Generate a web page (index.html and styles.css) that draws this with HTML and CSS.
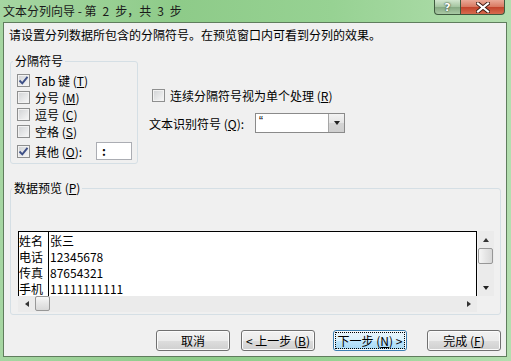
FILE: index.html
```html
<!DOCTYPE html>
<html lang="zh-CN">
<head>
  <meta charset="UTF-8" />
  <title>文本分列向导</title>
  <link rel="stylesheet" href="styles.css">
</head>
<body>
  <div class="window">
    <div class="titlebar">
      <span class="title">文本分列向导 - 第&ensp;2&ensp;步，共&ensp;3&ensp;步</span>
      <div class="caption-btns">
        <span class="cap-btn help">?</span>
        <span class="cap-btn close">
          <svg width="14" height="11" viewBox="0 0 14 11"><path d="M2 1.5 L12 9.5 M12 1.5 L2 9.5" stroke="#3a1a12" stroke-width="4" stroke-linecap="square"/><path d="M2 1.5 L12 9.5 M12 1.5 L2 9.5" stroke="#fff" stroke-width="2.2" stroke-linecap="square"/></svg>
        </span>
      </div>
    </div>

    <div class="client">
      <p class="intro">请设置分列数据所包含的分隔符号。在预览窗口内可看到分列的效果。</p>

      <div class="options">
        <fieldset class="group delims">
          <legend>分隔符号</legend>
          <div class="check-list">
            <label class="check"><span class="box"><svg width="11" height="11" viewBox="0 0 11 11"><polyline points="1.5,5.5 4.3,8.3 9.5,1.8" fill="none" stroke="#3d4f86" stroke-width="1.9"/></svg></span>Tab 键 (<u>T</u>)</label>
            <label class="check"><span class="box"></span>分号 (<u>M</u>)</label>
            <label class="check"><span class="box"></span>逗号 (<u>C</u>)</label>
            <label class="check"><span class="box"></span>空格 (<u>S</u>)</label>
            <label class="check other"><span class="box"><svg width="11" height="11" viewBox="0 0 11 11"><polyline points="1.5,5.5 4.3,8.3 9.5,1.8" fill="none" stroke="#3d4f86" stroke-width="1.9"/></svg></span>其他 (<u>O</u>):<span class="textbox">:</span></label>
          </div>
        </fieldset>

        <div class="side">
          <label class="check merge"><span class="box"></span>连续分隔符号视为单个处理 (<u>R</u>)</label>
          <div class="qualifier">
            <span class="qualifier-label">文本识别符号 (<u>Q</u>):</span>
            <div class="combo">
              <span class="combo-value">&#8220;</span>
              <span class="combo-btn"><span class="tri down"></span></span>
            </div>
          </div>
        </div>
      </div>

      <fieldset class="group preview-group">
        <legend>数据预览 (<u>P</u>)</legend>
        <div class="preview">
          <div class="sheet">
            <div class="col first">
              <div>姓名</div>
              <div>电话</div>
              <div>传真</div>
              <div>手机</div>
            </div>
            <div class="col">
              <div>张三</div>
              <div>12345678</div>
              <div>87654321</div>
              <div>11111111111</div>
            </div>
          </div>
          <div class="vscroll">
            <span class="arrow"><span class="tri up"></span></span>
            <span class="thumb"></span>
            <span class="track"></span>
            <span class="arrow"><span class="tri down"></span></span>
          </div>
          <div class="hscroll">
            <span class="arrow"><span class="tri left"></span></span>
            <span class="thumb"></span>
            <span class="track"></span>
            <span class="arrow"><span class="tri right"></span></span>
          </div>
          <div class="corner"></div>
        </div>
      </fieldset>

      <div class="buttons">
        <span class="btn">取消</span>
        <span class="btn back">&lt; 上一步 (<u>B</u>)</span>
        <span class="btn default"><span class="focus">下一步 (<u>N</u>) &gt;</span></span>
        <span class="btn">完成 (<u>F</u>)</span>
      </div>
    </div>
  </div>
</body>
</html>
```

FILE: styles.css
```css
* {
  box-sizing: border-box;
}
body {
  margin: 0;
  font-family: "Noto Sans CJK SC", "Liberation Sans", sans-serif;
  font-size: 12px;
  color: #000;
  background: #8cc98a;
}
u {
  text-decoration: underline;
}

/* window frame */
.window {
  width: 511px;
  height: 361px;
  display: flex;
  flex-direction: column;
  padding: 0 4px 4px 3px;
  background: linear-gradient(to right, #a6d6a2, #8ecb89 35%, #97d293 65%, #b3deaf);
}
.titlebar {
  height: 22px;
  display: flex;
  justify-content: space-between;
  align-items: flex-start;
}
.title {
  line-height: 22px;
  color: #1a1a1a;
}
.caption-btns {
  display: flex;
  margin-right: 2px;
}
.cap-btn {
  height: 15px;
  display: flex;
  align-items: center;
  justify-content: center;
  border: 1px solid #3f5a3f;
  border-top: none;
}
.help {
  width: 27px;
  border-radius: 0 0 0 4px;
  background: linear-gradient(#d2e6cf, #a3c49f 50%, #86a983 51%, #a9c9a4);
  color: #fff;
  font-family: "DejaVu Sans", sans-serif;
  font-weight: bold;
  font-size: 11px;
  text-shadow: 0 0 2px #2f452f, 0 0 1px #2f452f;
}
.close {
  width: 44px;
  border-left: none;
  border-radius: 0 0 4px 0;
  background: linear-gradient(#eaa997, #d87860 50%, #c2432b 51%, #d66c4f);
}
.client {
  flex: 1;
  background: #f0f0f0;
  border: 1px solid #5f7d5d;
}
.intro {
  margin: 4px 0 0 5px;
  line-height: 16px;
}

/* group boxes */
.group {
  margin: 0;
  padding: 0;
  border: 1px solid #d5dfe5;
  border-radius: 3px;
}
.group legend {
  padding: 0 2px;
  margin-left: 2px;
  line-height: 16px;
}

/* top options */
.options {
  display: flex;
  align-items: flex-start;
  margin-top: 10px;
  padding-left: 6px;
}
.delims {
  width: 128px;
}
.check-list {
  display: flex;
  flex-direction: column;
  padding: 3px 5px 3px 6px;
}
.check {
  display: flex;
  align-items: center;
  height: 17px;
  white-space: pre;
}
.check.other {
  height: 18px;
  margin-top: 2px;
}
.box {
  width: 13px;
  height: 13px;
  flex: none;
  margin-right: 5px;
  border: 1px solid #8e8f8f;
  background: linear-gradient(135deg, #d0d2d4, #f8f8f8);
  box-shadow: inset 0 0 0 1px #f2f2f2;
  display: flex;
  align-items: center;
  justify-content: center;
}
.textbox {
  margin-left: auto;
  width: 36px;
  height: 18px;
  background: #fff;
  border: 1px solid #abadb3;
  padding-left: 5px;
  line-height: 16px;
  font-weight: bold;
}
.side {
  margin-left: 11px;
  display: flex;
  flex-direction: column;
}
.check.merge {
  margin-top: 34px;
  padding-left: 3px;
  height: 16px;
}
.qualifier {
  display: flex;
  align-items: center;
  margin-top: 10px;
  height: 20px;
}
.qualifier-label {
  width: 106px;
}
.combo {
  width: 90px;
  height: 20px;
  display: flex;
  background: #fff;
  border: 1px solid #8a8a8a;
}
.combo-value {
  flex: 1;
  padding-left: 3px;
  line-height: 14px;
  color: #000;
  font-family: "Liberation Sans", sans-serif;
}
.combo-btn {
  width: 16px;
  display: flex;
  align-items: center;
  justify-content: center;
  border-left: 1px solid #a6a6a6;
  background: linear-gradient(#f3f3f3, #e4e4e4 50%, #d4d4d4 51%, #cfcfcf);
}

/* triangles */
.tri {
  width: 0;
  height: 0;
  border: 0 solid transparent;
}
.tri.down {
  border-width: 4px 3.5px 0;
  border-top-color: #222;
}
.tri.up {
  border-width: 0 3.5px 4px;
  border-bottom-color: #333;
}
.tri.left {
  border-width: 3.5px 4px 3.5px 0;
  border-right-color: #333;
}
.tri.right {
  border-width: 3.5px 0 3.5px 4px;
  border-left-color: #333;
}

/* preview */
.preview-group {
  margin: 16px 0 0 6px;
  width: 491px;
  padding: 35px 6px 2px 7px;
}
.preview-group legend {
  margin-left: -6px;
}
.preview {
  display: grid;
  grid-template-columns: 459px 17px;
  grid-template-rows: 65px 16px;
}
.sheet {
  display: flex;
  background: #fff;
  border: 1px solid #000;
  border-bottom: none;
  padding-top: 1px;
  overflow: hidden;
  line-height: 16px;
}
.col {
  padding-left: 1px;
}
.col.first {
  width: 30px;
  padding-left: 0;
  border-right: 1px solid #000;
  margin-top: -1px;
  padding-top: 1px;
}
.vscroll, .hscroll {
  display: flex;
  background: #ebebeb;
}
.vscroll {
  flex-direction: column;
  border-left: 1px solid #f4f4f4;
}
.arrow {
  flex: none;
  width: 17px;
  height: 17px;
  display: flex;
  align-items: center;
  justify-content: center;
}
.hscroll .arrow {
  height: 16px;
}
.vscroll .arrow {
  width: 16px;
}
.thumb {
  flex: none;
  border: 1px solid #979797;
  border-radius: 2px;
  background: linear-gradient(to right, #f6f6f6, #e6e6e6 50%, #d8d8d8);
}
.vscroll .thumb {
  width: 15px;
  height: 16px;
}
.hscroll .thumb {
  width: 15px;
  height: 15px;
  background: linear-gradient(#f6f6f6, #e6e6e6 50%, #d8d8d8);
}
.track {
  flex: 1;
}
.corner {
  background: #f0f0f0;
}

/* bottom buttons */
.buttons {
  display: flex;
  justify-content: flex-end;
  gap: 11px;
  margin-top: 15px;
  padding-right: 5px;
}
.btn {
  width: 74px;
  height: 21px;
  display: flex;
  align-items: center;
  justify-content: center;
  border: 1px solid #707070;
  border-radius: 3px;
  background: linear-gradient(#f2f2f2, #ebebeb 50%, #dddddd 51%, #cfcfcf);
  box-shadow: inset 0 0 0 1px #fbfbfb;
  white-space: pre;
}
.btn.back {
  margin-right: 7px;
}
.btn.default {
  margin-right: 9px;
  border-color: #3c7fb1;
  background: linear-gradient(#eaf6fd, #d9f0fc 50%, #bee6fd 51%, #a7d9f5);
}
.focus {
  outline: 1px dotted #000;
  padding: 0 2px;
  line-height: 15px;
}
```
